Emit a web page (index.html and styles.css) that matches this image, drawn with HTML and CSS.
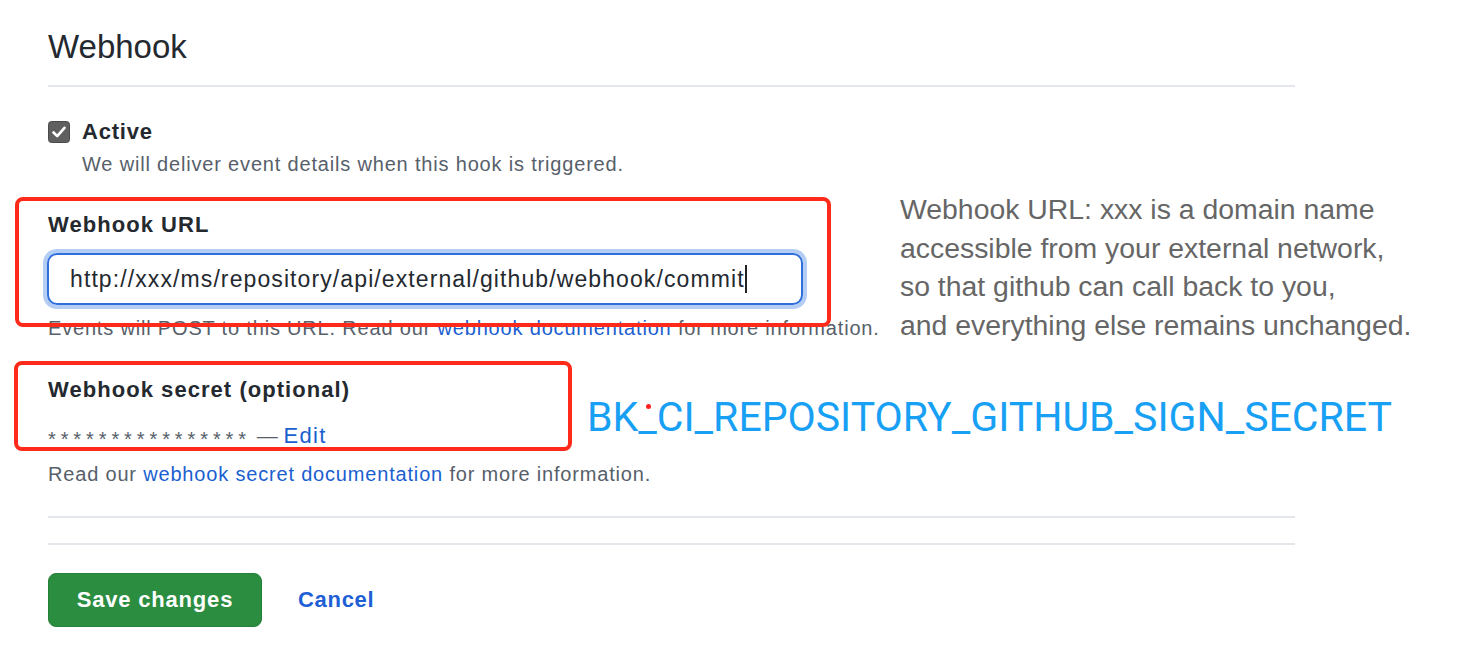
FILE: index.html
```html
<!DOCTYPE html>
<html>
<head>
<meta charset="utf-8">
<link rel="stylesheet" href="styles.css">
</head>
<body>
<div class="page">
  <h2 class="title">Webhook</h2>
  <div class="rule"></div>

  <div class="check-row">
    <span class="checkbox">
      <svg viewBox="0 0 22 22" width="22" height="22"><rect x="0.5" y="0.5" width="21" height="21" rx="3" fill="#5f5f5f" stroke="#4a4a4a"/><path d="M5.5 11.5 L9.2 15.2 L16.5 6.8" fill="none" stroke="#fff" stroke-width="2.6" stroke-linecap="round" stroke-linejoin="round"/></svg>
    </span>
    <div class="check-text">
      <div class="check-label">Active</div>
      <div class="note">We will deliver event details when this hook is triggered.</div>
    </div>
  </div>

  <div class="field url-field">
    <div class="label">Webhook URL</div>
    <div class="input"><span class="input-text">http://xxx/ms/repository/api/external/github/webhook/commit</span><span class="caret"></span></div>
    <div class="note hint">Events will POST to this URL. Read our <span class="link">webhook documentation</span> for more information.</div>
  </div>

  <div class="field secret-field">
    <div class="label">Webhook secret (optional)</div>
    <div class="secret"><span class="stars">****************</span> — <span class="link edit">Edit</span></div>
    <div class="note hint2">Read our <span class="link">webhook secret documentation</span> for more information.</div>
  </div>

  <div class="rule rule-a"></div>
  <div class="rule rule-b"></div>

  <div class="actions">
    <button class="btn-save">Save changes</button>
    <span class="cancel">Cancel</span>
  </div>

  <div class="mark mark-url"></div>
  <div class="mark mark-secret"></div>
  <div class="annot-text">Webhook URL: xxx is a domain name<br>accessible from your external network,<br>so that github can call back to you,<br>and everything else remains unchanged.</div>
  <div class="annot-secret">BK<span class="us">_<span class="dot"></span></span>CI_REPOSITORY_GITHUB_SIGN_SECRET</div>
</div>
</body>
</html>
```

FILE: styles.css
```css
html, body {
  margin: 0;
  padding: 0;
  background: #ffffff;
}
body {
  font-family: "Liberation Sans", Arial, sans-serif;
  color: #1f2328;
}
.page {
  position: relative;
  width: 1462px;
  height: 672px;
  padding: 0 0 0 48px;
  box-sizing: border-box;
  overflow: hidden;
}
.title {
  margin: 0;
  padding-top: 28px;
  font-size: 33px;
  line-height: 38px;
  font-weight: normal;
  color: #24292f;
}
.rule {
  width: 1247px;
  height: 2px;
  background: #e3e7ec;
}
.title + .rule {
  margin-top: 19px;
}
.check-row {
  display: flex;
  gap: 12px;
  margin-top: 32px;
}
.checkbox {
  width: 22px;
  height: 22px;
  margin-top: 2px;
  flex: none;
}
.checkbox svg { display: block; }
.check-label {
  font-size: 22px;
  font-weight: bold;
  line-height: 26px;
  letter-spacing: 0.8px;
  color: #24292f;
}
.note {
  font-size: 20px;
  line-height: 24px;
  letter-spacing: 0.82px;
  color: #57606a;
}
.check-text .note {
  margin-top: 7px;
}
.url-field {
  margin-top: 36px;
}
.label {
  font-size: 22px;
  font-weight: bold;
  line-height: 26px;
  letter-spacing: 1.05px;
  color: #24292f;
}
.input {
  margin-top: 15px;
  width: 756px;
  height: 52px;
  box-sizing: border-box;
  border: 2px solid #2f6fdc;
  border-radius: 10px;
  box-shadow: 0 0 0 4px #b3cdf4;
  display: flex;
  align-items: center;
  padding-left: 21px;
  margin-left: -1px;
}
.input-text {
  font-size: 23px;
  letter-spacing: 1.1px;
  color: #24292f;
}
.caret {
  width: 2px;
  height: 28px;
  background: #222;
  margin-left: 0;
}
.hint {
  margin-top: 11px;
  white-space: nowrap;
}
.link {
  color: #1a5fd0;
}
.secret-field {
  margin-top: 37px;
}
.secret {
  margin-top: 20px;
  font-size: 21px;
  line-height: 26px;
  color: #57606a;
}
.stars {
  font-size: 20px;
  letter-spacing: 4.9px;
  vertical-align: -3px;
  color: #57606a;
}
.secret .edit {
  font-size: 22px;
  letter-spacing: 1.3px;
}
.hint2 {
  margin-top: 10px;
}
.rule-a {
  margin-top: 30px;
}
.rule-b {
  margin-top: 25px;
}
.actions {
  display: flex;
  align-items: center;
  gap: 36px;
  margin-top: 28px;
}
.btn-save {
  width: 214px;
  height: 54px;
  border: 1px solid #26803a;
  border-radius: 8px;
  background: #2a8d3f;
  color: #ffffff;
  font-family: "Liberation Sans", Arial, sans-serif;
  font-size: 22px;
  font-weight: bold;
  letter-spacing: 0.8px;
  padding: 0;
}
.cancel {
  font-size: 22px;
  font-weight: bold;
  letter-spacing: 0.7px;
  color: #1f5fd6;
}
.mark {
  position: absolute;
  border: 4px solid #ff2a1a;
  border-radius: 8px;
  box-sizing: border-box;
}
.mark-url {
  left: 15px;
  top: 197px;
  width: 816px;
  height: 130px;
}
.mark-secret {
  left: 14px;
  top: 361px;
  width: 558px;
  height: 90px;
}
.annot-text {
  position: absolute;
  left: 900px;
  top: 190px;
  font-size: 28.4px;
  line-height: 38.5px;
  color: #666666;
}
.annot-secret {
  position: absolute;
  left: 587px;
  top: 394px;
  font-family: Roboto, "Liberation Sans", sans-serif;
  font-size: 41px;
  line-height: 46px;
  color: #18a0f5;
  white-space: nowrap;
}
.us {
  position: relative;
}
.dot {
  position: absolute;
  left: 8px;
  top: 11px;
  width: 5px;
  height: 5px;
  border-radius: 50%;
  background: #ff2020;
}
```
